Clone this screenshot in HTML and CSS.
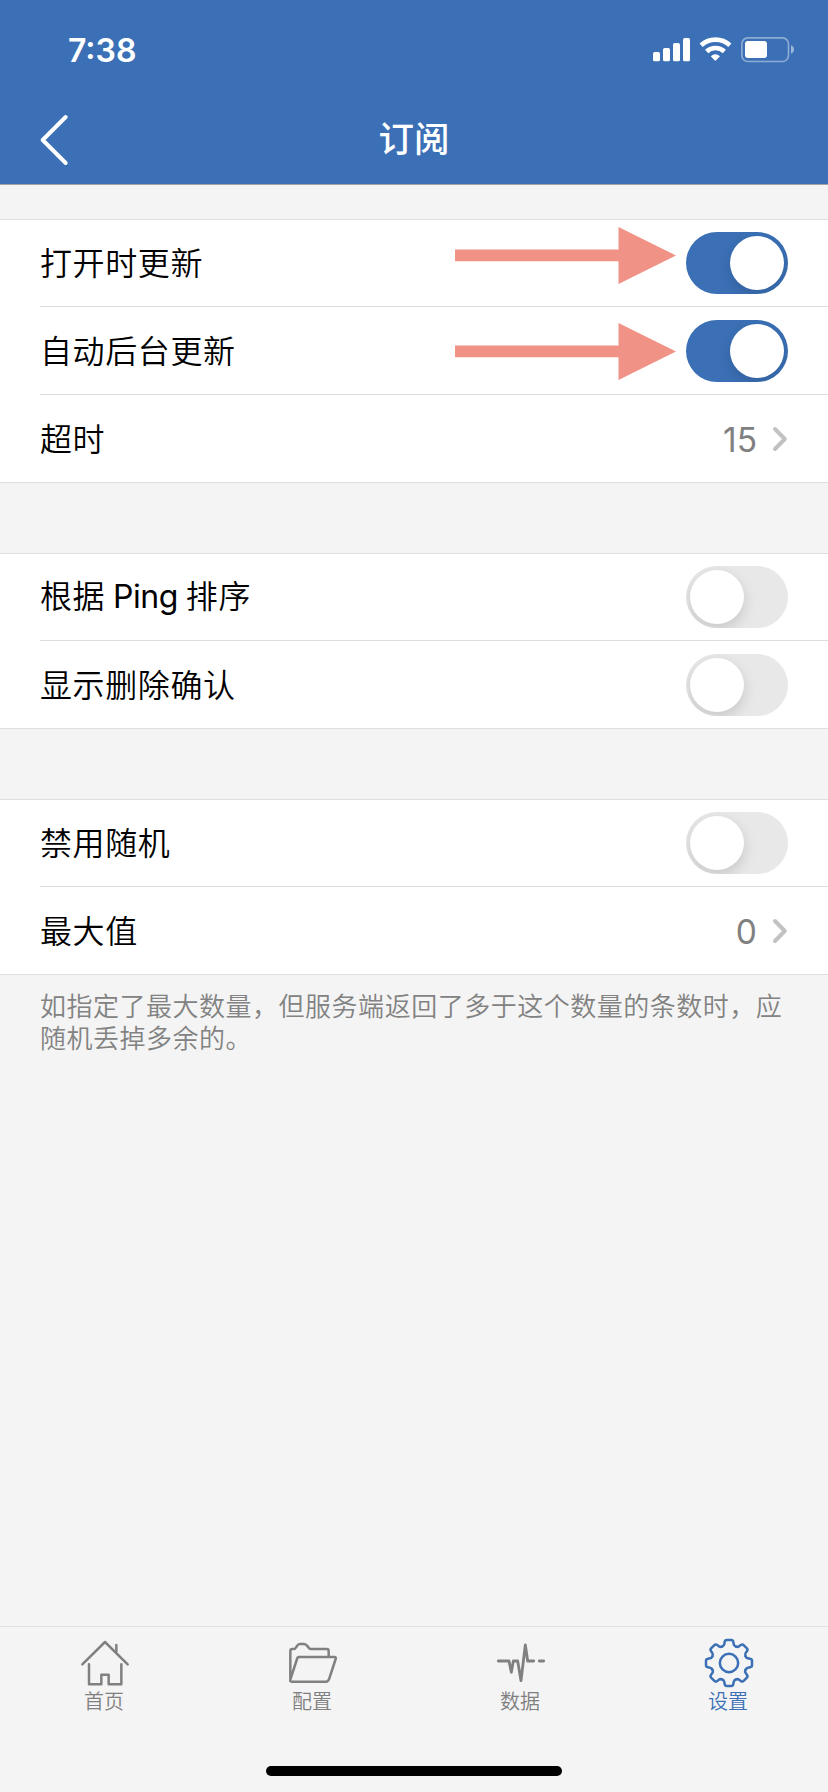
FILE: index.html
```
<!DOCTYPE html>
<html lang="zh-CN">
<head>
<meta charset="utf-8">
<title>订阅</title>
<link rel="stylesheet" href="styles.css">
</head>
<body>
<div class="screen">
  <header class="header">
    <div class="status">
      <span class="time">7:38</span>
      <svg class="status-icons" viewBox="717 105 426 90" fill="#fff">
        <rect x="717" y="156" width="21" height="28" rx="5"/>
        <rect x="747" y="144" width="21" height="40" rx="5"/>
        <rect x="777" y="129" width="21" height="55" rx="5"/>
        <rect x="807" y="114" width="21" height="70" rx="5"/>
        <g fill="none" stroke="#fff" stroke-width="14">
          <path d="M861.500 135.800a63.500 63.500 0 0 1 86 0"/>
          <path d="M878 154.500a39 39 0 0 1 53 0"/>
        </g>
        <path d="M890.500 168.500q13.500-11 27.500 0l-11.500 12.500q-2.500 2.500-5 0z"/>
        <rect x="983.500" y="113.500" width="140" height="71" rx="18" fill="none" stroke="#fff" stroke-width="5" opacity=".42"/>
        <rect x="993" y="123" width="66" height="51" rx="9"/>
        <path d="M1131 136q9 4 9 12.500t-9 12.500z" opacity=".5"/>
      </svg>
    </div>
    <nav class="navbar">
      <svg class="back" viewBox="117 340 90 162"><path d="M197 352L128 421L197 490" fill="none" stroke="#fff" stroke-width="12" stroke-linecap="round" stroke-linejoin="round"/></svg>
      <h1 class="title">订阅</h1>
    </nav>
  </header>

  <main class="content">
    <section class="group">
      <div class="row first">
        <span class="label">打开时更新</span>
        <span class="toggle on"><i class="knob"></i></span>
        <svg class="arrow arrow-a" viewBox="0 0 221 57"><path d="M0 22.500H163.500V0L221 28.500L163.500 57V34.300H0Z" fill="#f19286"/></svg>
      </div>
      <div class="row">
        <span class="label">自动后台更新</span>
        <span class="toggle on"><i class="knob"></i></span>
        <svg class="arrow arrow-b" viewBox="0 0 221 57"><path d="M0 22.500H163.500V0L221 28.500L163.500 57V34.300H0Z" fill="#f19286"/></svg>
      </div>
      <div class="row">
        <span class="label">超时</span>
        <span class="value">15</span>
        <svg class="chevron" viewBox="0 0 16 26"><path d="M3 3L12.800 13L3 23" /></svg>
      </div>
    </section>

    <section class="group">
      <div class="row first">
        <span class="label">根据 <span class="latin">Ping</span> 排序</span>
        <span class="toggle"><i class="knob"></i></span>
      </div>
      <div class="row">
        <span class="label">显示删除确认</span>
        <span class="toggle"><i class="knob"></i></span>
      </div>
    </section>

    <section class="group">
      <div class="row first">
        <span class="label">禁用随机</span>
        <span class="toggle"><i class="knob"></i></span>
      </div>
      <div class="row">
        <span class="label">最大值</span>
        <span class="value">0</span>
        <svg class="chevron" viewBox="0 0 16 26"><path d="M3 3L12.800 13L3 23" /></svg>
      </div>
    </section>
    <p class="note">如指定了最大数量，但服务端返回了多于这个数量的条数时，应<br>随机丢掉多余的。</p>
  </main>

  <footer class="tabbar">
    <a class="tab">
      <svg class="tab-icon" viewBox="240 84 150 150">
        <path d="M247 163L315 96L383 163M349 127V105M267 163V223H304V194H326V223H364V163"/>
      </svg>
      <span>首页</span>
    </a>
    <a class="tab">
      <svg class="tab-icon" viewBox="864 84 150 150">
        <path d="M871 210V123q0-6 6-6h4q5 0 8-6l2-3q3-6 9-6h11q6 0 9 4l6 7q3 4 8 4h46q6 0 6 6v17M895 141H1003q6 0 4 6L987 208q-3 7-9 7H875q-6 0-4-6l20-62q1-6 7-6z"/>
      </svg>
      <span>配置</span>
    </a>
    <a class="tab">
      <svg class="tab-icon bold" viewBox="246 84 150 150">
        <path d="M253 153H285L292 187L298 153H311L321 212L334 105L341 153H359M376 153H389"/>
      </svg>
      <span>数据</span>
    </a>
    <a class="tab active">
      <svg class="tab-icon" viewBox="-75 -75 150 150">
        <defs><path id="tooth" d="M-20.500-49.500Q-15-51.400-14-57L-13-63Q-12-69-7-69H7Q12-69 13-63L14-57Q15-51.400 20.500-49.500"/></defs>
        <use href="#tooth"/>
        <use href="#tooth" transform="rotate(45)"/>
        <use href="#tooth" transform="rotate(90)"/>
        <use href="#tooth" transform="rotate(135)"/>
        <use href="#tooth" transform="rotate(180)"/>
        <use href="#tooth" transform="rotate(225)"/>
        <use href="#tooth" transform="rotate(270)"/>
        <use href="#tooth" transform="rotate(315)"/>
        <circle r="27.500"/>
      </svg>
      <span>设置</span>
    </a>
  </footer>
  <div class="home-indicator"></div>
</div>
</body>
</html>
```
FILE: styles.css
```
* { box-sizing: border-box; }
body { margin: 0; }
.screen {
  width: 828px;
  height: 1792px;
  overflow: hidden;
  display: flex;
  flex-direction: column;
  background: #f4f4f4;
  color: #000;
  font-family: Inter, "Noto Sans CJK SC", sans-serif;
}
.header {
  height: 185px;
  flex: none;
  background: #3b70b6;
  color: #fff;
  border-bottom: 1px solid #a3a3a6;
}
.status {
  height: 94px;
  padding: 6px 33px 0 68px;
  display: flex;
  justify-content: space-between;
  align-items: center;
}
.time { font-size: 32px; line-height: 38px; font-weight: 560; padding-top: 1px; }
.status-icons { width: 142px; height: 30px; }
.navbar {
  height: 90px;
  padding: 0 39px;
  display: grid;
  grid-template-columns: 30px 1fr 30px;
  align-items: center;
}
.back { width: 30px; height: 54px; margin-top: 1px; }
.title {
  margin: 0 0 4px;
  text-align: center;
  font: 500 35.500px/50px "Noto Sans CJK SC", sans-serif;
}
.content { flex: 1; padding-top: 34px; }
.group {
  background: #fff;
  border-top: 1px solid #dedede;
  border-bottom: 1px solid #dedede;
  margin-bottom: 70px;
}
.group:last-of-type { margin-bottom: 0; }
.row {
  position: relative;
  height: 88px;
  margin-left: 40px;
  padding-right: 40px;
  display: flex;
  align-items: center;
  border-top: 1px solid #dedede;
}
.row.first { height: 86px; border-top: 0; }
.label {
  flex: 1;
  margin-bottom: 4px;
  font-family: "Noto Sans CJK SC", sans-serif;
  font-weight: 350;
  font-size: 32px;
  line-height: 48px;
  letter-spacing: .6px;
}
.latin { font-family: Inter, sans-serif; font-weight: 400; letter-spacing: -.4px; }
.value { font-size: 33.5px; line-height: 40px; color: #808080; margin: 3px 15px 0 0; }
.chevron {
  width: 16px;
  height: 26px;
  margin-top: 1px;
  fill: none;
  stroke: #c2c2c2;
  stroke-width: 4;
  stroke-linecap: round;
  stroke-linejoin: round;
}
.toggle {
  width: 102px;
  height: 62px;
  padding: 4px;
  border-radius: 31px;
  overflow: hidden;
  display: flex;
  background: #e8e8e8;
}
.toggle.on { background: #3b70b6; justify-content: flex-end; }
.knob {
  width: 54px;
  height: 54px;
  border-radius: 50%;
  background: #fff;
  box-shadow: 0 5px 14px rgba(0, 0, 0, .15);
}
.arrow { position: absolute; left: 415px; width: 221px; height: 57px; }
.arrow-a { top: 7px; }
.arrow-b { top: 16px; }
.note {
  margin: 14px 0 0;
  padding-left: 40px;
  font: 350 26px/32px "Noto Sans CJK SC", sans-serif;
  letter-spacing: .51px;
  color: #828282;
  white-space: nowrap;
}
.tabbar {
  height: 140px;
  flex: none;
  display: grid;
  grid-template-columns: repeat(4, 208px);
  border-top: 1px solid #e0e0e0;
}
.tab {
  display: flex;
  flex-direction: column;
  align-items: center;
  padding-top: 11px;
  color: #808080;
  font: 350 20px/28px "Noto Sans CJK SC", sans-serif;
}
.tab.active { color: #3b70b6; }
.tab-icon {
  width: 50px;
  height: 50px;
  margin-left: 2px;
  margin-bottom: -1px;
  fill: none;
  stroke: currentColor;
  stroke-width: 7.5;
  stroke-linecap: round;
  stroke-linejoin: round;
}
.tab-icon.bold { stroke-width: 8.5; }
.home-indicator {
  width: 296px;
  height: 10px;
  flex: none;
  align-self: center;
  margin-bottom: 16px;
  border-radius: 5px;
  background: #000;
}
```
